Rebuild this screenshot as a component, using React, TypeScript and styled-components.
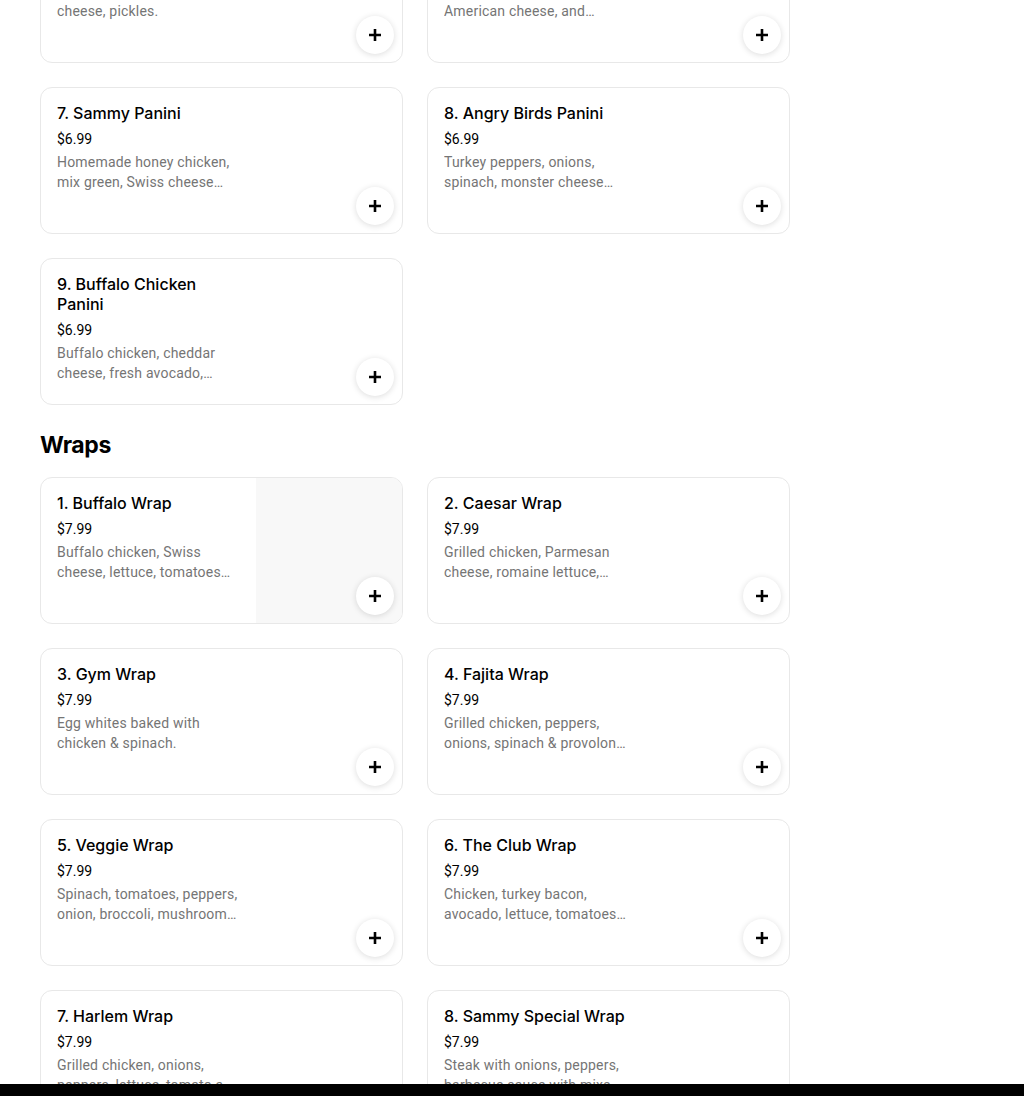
import React from 'react';
import styled, { createGlobalStyle } from 'styled-components';

const GlobalStyle = createGlobalStyle`
    html, body {
        margin: 0;
        padding: 0;
        background: #ffffff;
        overflow: hidden;
    }
    body {
        font-family: Inter, "Noto Sans", "Liberation Sans", sans-serif;
        color: #000000;
    }
`;

interface Item {
    name: string;
    price: string;
    description: string;
    image?: boolean;
}

const paninis: Item[] = [
    { name: '5. Cuban Panini', price: '$6.99', description: 'Roast pork, ham, Swiss cheese, pickles.' },
    { name: '6. Philly Steak Panini', price: '$6.99', description: 'Steak, onions, peppers, American cheese, and mayonnaise.' },
    { name: '7. Sammy Panini', price: '$6.99', description: 'Homemade honey chicken, mix green, Swiss cheese and honey mustard.' },
    { name: '8. Angry Birds Panini', price: '$6.99', description: 'Turkey peppers, onions, spinach, monster cheese and chipotle mayo.' },
    { name: '9. Buffalo Chicken Panini', price: '$6.99', description: 'Buffalo chicken, cheddar cheese, fresh avocado, lettuce and ranch.' },
];

const wraps: Item[] = [
    { name: '1. Buffalo Wrap', price: '$7.99', description: 'Buffalo chicken, Swiss cheese, lettuce, tomatoes and ranch.', image: true },
    { name: '2. Caesar Wrap', price: '$7.99', description: 'Grilled chicken, Parmesan cheese, romaine lettuce, croutons and Caesar dressing.' },
    { name: '3. Gym Wrap', price: '$7.99', description: 'Egg whites baked with chicken & spinach.' },
    { name: '4. Fajita Wrap', price: '$7.99', description: 'Grilled chicken, peppers, onions, spinach & provolone cheese.' },
    { name: '5. Veggie Wrap', price: '$7.99', description: 'Spinach, tomatoes, peppers, onion, broccoli, mushroom and hummus.' },
    { name: '6. The Club Wrap', price: '$7.99', description: 'Chicken, turkey bacon, avocado, lettuce, tomatoes and mayo.' },
    { name: '7. Harlem Wrap', price: '$7.99', description: 'Grilled chicken, onions, peppers, lettuce, tomato and chipotle.' },
    { name: '8. Sammy Special Wrap', price: '$7.99', description: 'Steak with onions, peppers, barbecue sauce with mixed greens.' },
];

const Page = styled.div`
    height: 100vh;
    overflow: hidden;
`;

const Content = styled.main`
    width: 750px;
    margin: -84px 0 0 40px;
`;

const SectionTitle = styled.h2`
    margin: 24px 0 16px;
    font-size: 23px;
    line-height: 32px;
    font-weight: 700;
    letter-spacing: -0.4px;
`;

const Grid = styled.div`
    display: grid;
    grid-template-columns: 1fr 1fr;
    gap: 24px;
`;

const Card = styled.div`
    box-sizing: border-box;
    height: 147px;
    display: flex;
    border: 1px solid #e8e8e8;
    border-radius: 12px;
    overflow: hidden;
    background: #ffffff;
`;

const Info = styled.div`
    flex: 1;
    min-width: 0;
    padding: 15px 16px 16px;
`;

const Name = styled.div`
    font-size: 16px;
    line-height: 20px;
    font-weight: 500;
`;

const Price = styled.div`
    margin-top: 6px;
    font-family: Roboto, "Liberation Sans", sans-serif;
    font-size: 14px;
    line-height: 20px;
    font-weight: 400;
`;

const Description = styled.div`
    margin-top: 3px;
    font-family: Roboto, "Liberation Sans", sans-serif;
    font-size: 14px;
    line-height: 20px;
    letter-spacing: 0.2px;
    color: #757575;
    display: -webkit-box;
    -webkit-line-clamp: 2;
    -webkit-box-orient: vertical;
    overflow: hidden;
`;

const ImageArea = styled.div<{ filled?: boolean }>`
    position: relative;
    flex: 0 0 146px;
    height: 100%;
    background: ${props => (props.filled ? '#f8f8f8' : 'transparent')};
`;

const AddButton = styled.button`
    position: absolute;
    right: 8px;
    bottom: 8px;
    width: 38px;
    height: 38px;
    padding: 0;
    border: none;
    border-radius: 50%;
    background: #ffffff;
    box-shadow: 0 1px 6px rgba(0, 0, 0, 0.14);
    display: flex;
    align-items: center;
    justify-content: center;
    cursor: pointer;
`;

const BottomBar = styled.div`
    position: fixed;
    left: 0;
    right: 0;
    bottom: 0;
    height: 12px;
    background: #000000;
`;

const PlusIcon = () => (
    <svg width="14" height="14" viewBox="0 0 14 14">
        <path d="M7 1v12M1 7h12" stroke="#000" strokeWidth="2.6" />
    </svg>
);

function MenuCard({ item }: { item: Item }) {
    return (
        <Card>
            <Info>
                <Name>{item.name}</Name>
                <Price>{item.price}</Price>
                <Description>{item.description}</Description>
            </Info>
            <ImageArea filled={item.image}>
                <AddButton aria-label="Add">
                    <PlusIcon />
                </AddButton>
            </ImageArea>
        </Card>
    );
}

export default function App() {
    return (
        <Page>
            <GlobalStyle />
            <Content>
                <Grid>
                    {paninis.map(item => (
                        <MenuCard key={item.name} item={item} />
                    ))}
                </Grid>
                <SectionTitle>Wraps</SectionTitle>
                <Grid>
                    {wraps.map(item => (
                        <MenuCard key={item.name} item={item} />
                    ))}
                </Grid>
            </Content>
            <BottomBar />
        </Page>
    );
}
